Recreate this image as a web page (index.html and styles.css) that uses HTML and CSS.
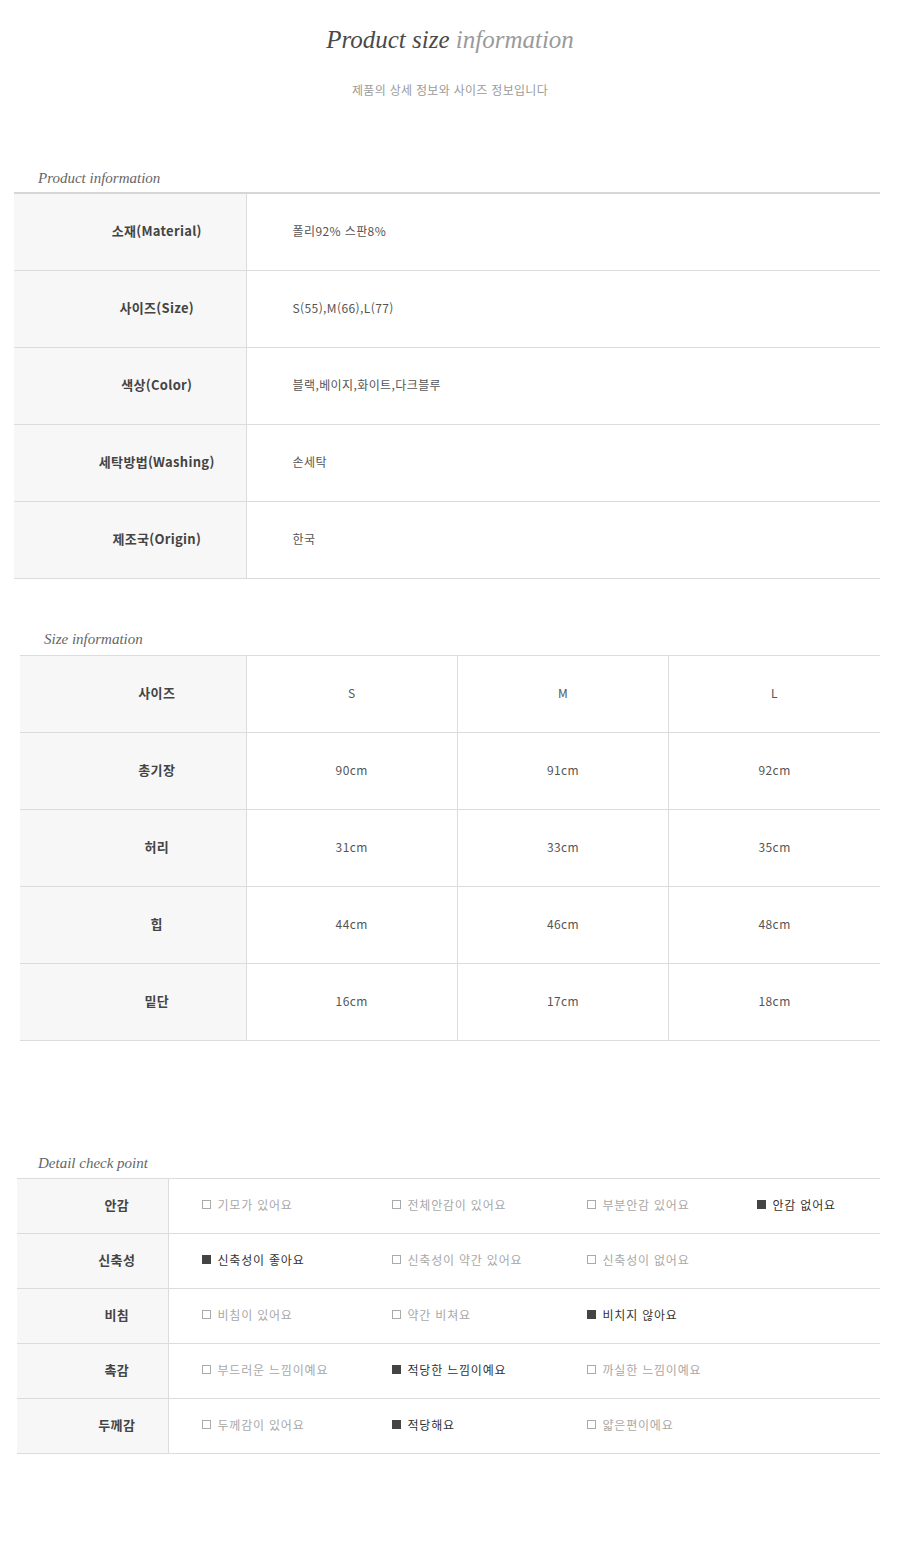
FILE: index.html
```html
<!DOCTYPE html>
<html lang="ko">
<head>
<meta charset="utf-8">
<link rel="stylesheet" href="styles.css">
</head>
<body>
<div class="page">
  <header class="top">
    <h1 class="title"><span class="dark">Product size</span> <span class="light">information</span></h1>
    <p class="sub">제품의 상세 정보와 사이즈 정보입니다</p>
  </header>

  <section class="sec sec-product">
    <h2 class="sec-title">Product information</h2>
    <table class="tbl tbl-product">
      <tr><th>소재(Material)</th><td>폴리92% 스판8%</td></tr>
      <tr><th>사이즈(Size)</th><td>S(55),M(66),L(77)</td></tr>
      <tr><th>색상(Color)</th><td>블랙,베이지,화이트,다크블루</td></tr>
      <tr><th>세탁방법(Washing)</th><td>손세탁</td></tr>
      <tr><th>제조국(Origin)</th><td>한국</td></tr>
    </table>
  </section>

  <section class="sec sec-size">
    <h2 class="sec-title">Size information</h2>
    <table class="tbl tbl-size">
      <tr><th>사이즈</th><td>S</td><td>M</td><td>L</td></tr>
      <tr><th>총기장</th><td>90cm</td><td>91cm</td><td>92cm</td></tr>
      <tr><th>허리</th><td>31cm</td><td>33cm</td><td>35cm</td></tr>
      <tr><th>힙</th><td>44cm</td><td>46cm</td><td>48cm</td></tr>
      <tr><th>밑단</th><td>16cm</td><td>17cm</td><td>18cm</td></tr>
    </table>
  </section>

  <section class="sec sec-detail">
    <h2 class="sec-title">Detail check point</h2>
    <table class="tbl tbl-detail">
      <tr><th>안감</th><td><div class="opts">
        <span class="opt"><i class="box"></i>기모가 있어요</span>
        <span class="opt"><i class="box"></i>전체안감이 있어요</span>
        <span class="opt"><i class="box"></i>부분안감 있어요</span>
        <span class="opt on"><i class="box"></i>안감 없어요</span>
      </div></td></tr>
      <tr><th>신축성</th><td><div class="opts">
        <span class="opt on"><i class="box"></i>신축성이 좋아요</span>
        <span class="opt"><i class="box"></i>신축성이 약간 있어요</span>
        <span class="opt"><i class="box"></i>신축성이 없어요</span>
      </div></td></tr>
      <tr><th>비침</th><td><div class="opts">
        <span class="opt"><i class="box"></i>비침이 있어요</span>
        <span class="opt"><i class="box"></i>약간 비쳐요</span>
        <span class="opt on"><i class="box"></i>비치지 않아요</span>
      </div></td></tr>
      <tr><th>촉감</th><td><div class="opts">
        <span class="opt"><i class="box"></i>부드러운 느낌이예요</span>
        <span class="opt on"><i class="box"></i>적당한 느낌이예요</span>
        <span class="opt"><i class="box"></i>까실한 느낌이예요</span>
      </div></td></tr>
      <tr><th>두께감</th><td><div class="opts">
        <span class="opt"><i class="box"></i>두께감이 있어요</span>
        <span class="opt on"><i class="box"></i>적당해요</span>
        <span class="opt"><i class="box"></i>얇은편이에요</span>
      </div></td></tr>
    </table>
  </section>
</div>
</body>
</html>
```

FILE: styles.css
```css
* { box-sizing: border-box; }
html, body { margin: 0; padding: 0; background: #fff; }
body {
  font-family: "Liberation Sans", "Noto Sans CJK KR", sans-serif;
  color: #555;
}
.page { width: 900px; }

.top { text-align: center; padding-top: 24px; }
.title {
  margin: 0;
  font-family: "Liberation Serif", "DejaVu Serif", serif;
  font-style: italic;
  font-weight: normal;
  font-size: 25px;
  line-height: 32px;
  letter-spacing: 0;
}
.title .dark { color: #4a4a4a; }
.title .light { color: #9a9a9a; }
.sub {
  margin: 26px 0 0;
  font-size: 12px;
  line-height: 16px;
  color: #9b9b9b;
  letter-spacing: 0.3px;
  font-family: "Noto Sans CJK KR", sans-serif;
}

.sec-title {
  margin: 0;
  font-family: "Liberation Serif", "DejaVu Serif", serif;
  font-style: italic;
  font-weight: normal;
  font-size: 15px;
  line-height: 20px;
  color: #666;
}

.tbl {
  border-collapse: collapse;
  border-spacing: 0;
  table-layout: fixed;
  font-family: "Noto Sans CJK KR", sans-serif;
}
.tbl th, .tbl td {
  padding: 0 0 3px;
  border-bottom: 1px solid #dcdcdc;
}
.tbl th {
  background: #f7f7f7;
  font-weight: bold;
  font-size: 13px;
  color: #444;
  letter-spacing: 0.3px;
  border-right: 1px solid #dcdcdc;
}
.tbl td {
  font-size: 12px;
  color: #555;
  letter-spacing: 0.4px;
}

/* product */
.sec-product { margin-top: 70px; padding-left: 14px; }
.sec-product .sec-title { padding-left: 24px; margin-bottom: 4px; }
.tbl-product { width: 866px; border-top: 2px solid #d6d6d6; }
.tbl-product tr { height: 77px; }
.tbl-product th { width: 232px; padding-left: 54px; text-align: center; }
.tbl-product td { padding-left: 46px; text-align: left; }

/* size */
.sec-size { margin-top: 50px; padding-left: 20px; }
.sec-size .sec-title { padding-left: 24px; margin-bottom: 6px; }
.tbl-size { width: 860px; border-top: 1px solid #dcdcdc; }
.tbl-size tr { height: 77px; }
.tbl-size th { width: 226px; padding-left: 48px; text-align: center; }
.tbl-size td { text-align: center; border-right: 1px solid #dcdcdc; }
.tbl-size td:last-child { border-right: 0; }

/* detail */
.sec-detail { margin-top: 112px; padding-left: 17px; }
.sec-detail .sec-title { padding-left: 21px; margin-bottom: 5px; }
.tbl-detail { width: 863px; border-top: 1px solid #dcdcdc; }
.tbl-detail tr { height: 55px; }
.tbl-detail th { width: 151px; padding-left: 49px; text-align: center; }
.tbl-detail td { padding-left: 33px; }

.opts {
  display: grid;
  grid-template-columns: 190px 195px 170px auto;
  align-items: center;
}
.opt {
  display: flex;
  align-items: center;
  color: #a8a8a8;
  font-size: 12px;
  letter-spacing: 0.8px;
  white-space: nowrap;
}
.opt .box {
  display: inline-block;
  width: 9px;
  height: 9px;
  border: 1px solid #aaa;
  margin-right: 7px;
  flex: none;
}
.opt.on { color: #333; }
.opt.on .box { background: #444; border-color: #444; }
```
